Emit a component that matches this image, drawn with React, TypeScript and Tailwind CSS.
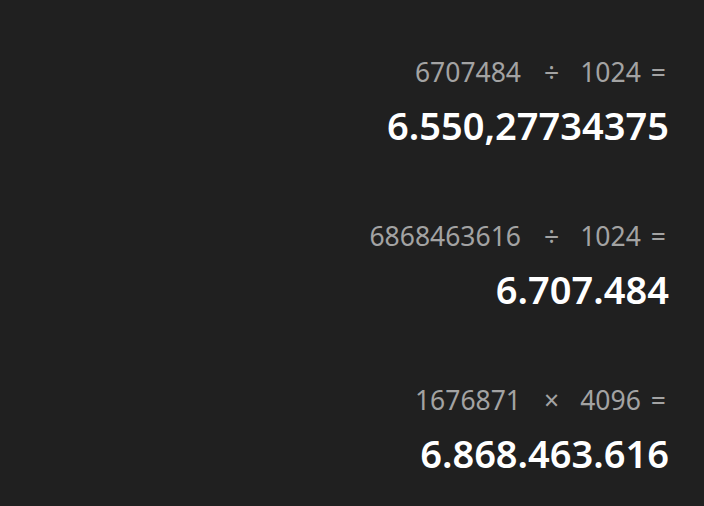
import React from "react";

type Entry = { a: string; op: string; b: string; result: string };

const history: Entry[] = [
  { a: "6707484", op: "÷", b: "1024", result: "6.550,27734375" },
  { a: "6868463616", op: "÷", b: "1024", result: "6.707.484" },
  { a: "1676871", op: "×", b: "4096", result: "6.868.463.616" },
];

function HistoryItem({ entry }: { entry: Entry }) {
  return (
    <div className="flex flex-col items-end">
      <div className="flex items-center pr-[3px] text-[26.5px] leading-[32px] text-[#a3a3a3]">
        <span>{entry.a}</span>
        <span className="ml-[23px]">{entry.op}</span>
        <span className="ml-[21px]">{entry.b}</span>
        <span className="ml-[10px]">=</span>
      </div>
      <div className="mt-[15px] text-[38px] leading-[44px] font-semibold text-white">
        {entry.result}
      </div>
    </div>
  );
}

export default function App() {
  return (
    <div
      className="w-[704px] h-[506px] bg-[#202020] overflow-hidden pt-[56px] pr-[35px] flex flex-col items-end gap-[73px]"
      style={{ fontFamily: '"Noto Sans", "Open Sans", sans-serif' }}
    >
      {history.map((e, i) => (
        <HistoryItem key={i} entry={e} />
      ))}
    </div>
  );
}
